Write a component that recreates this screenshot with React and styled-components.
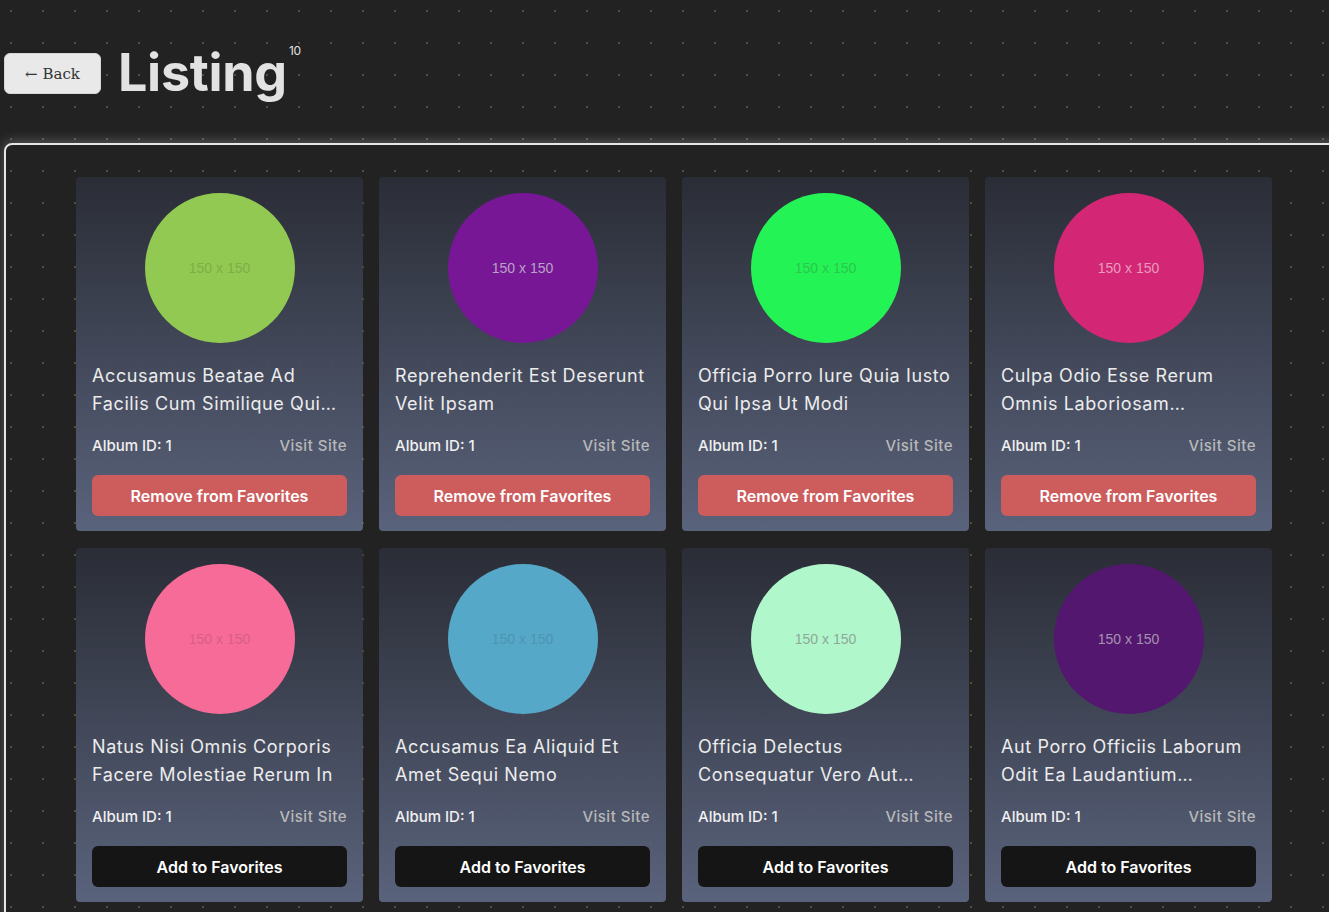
import React from "react";
import styled, { createGlobalStyle } from "styled-components";

const GlobalStyle = createGlobalStyle`
  html, body {
    margin: 0;
    overflow: hidden;
    background-color: #222222;
    background-image: radial-gradient(circle, #4d5236 1px, transparent 1.4px);
    background-size: 32px 32px;
    background-position: -5px -5px;
    font-family: "Inter", "DejaVu Sans", sans-serif;
  }
`;

const Page = styled.div`
  padding: 43px 0 0 4px;
`;

const Header = styled.div`
  display: flex;
  align-items: center;
  gap: 17px;
`;

const BackButton = styled.button`
  width: 97px;
  height: 41px;
  margin-top: 1px;
  background: #e9e9e9;
  border: 1px solid #d6d6d6;
  border-radius: 6px;
  color: #333;
  font-family: "DejaVu Serif", "Liberation Serif", serif;
  font-size: 15px;
  cursor: pointer;
`;

const Title = styled.h1`
  position: relative;
  margin: 0;
  color: #e2e2e2;
  font-size: 52px;
  font-weight: 700;
  letter-spacing: -0.3px;
  line-height: 60px;
`;

const Count = styled.span`
  position: absolute;
  top: 2px;
  left: calc(100% + 2px);
  font-size: 12px;
  line-height: 1;
  font-weight: 400;
  color: #e2e2e2;
`;

const Panel = styled.div`
  margin-top: 40px;
  width: 1400px;
  border: 2px solid #e6e6e6;
  border-radius: 8px;
  box-shadow: 0 -2px 12px rgba(255, 255, 255, 0.25);
  padding: 32px 0 40px 70px;
`;

const Grid = styled.div`
  display: grid;
  grid-template-columns: repeat(4, 287px);
  column-gap: 16px;
  row-gap: 17px;
`;

const Card = styled.div`
  display: flex;
  flex-direction: column;
  padding: 16px 16px 15px;
  border-radius: 4px;
  background: linear-gradient(
    to bottom,
    rgba(43, 46, 56, 0.9),
    rgba(96, 106, 134, 0.9)
  );
`;

const Thumb = styled.div`
  align-self: center;
  width: 150px;
  height: 150px;
  border-radius: 50%;
  background: ${(p) => p.$color};
  display: flex;
  align-items: center;
  justify-content: center;
  color: ${(p) => p.$text};
  font-family: "Liberation Sans", Arial, sans-serif;
  font-size: 14px;
`;

const CardTitle = styled.div`
  margin-top: 19px;
  height: 56px;
  color: #ececec;
  font-size: 18px;
  letter-spacing: 0.6px;
  line-height: 28px;
  display: -webkit-box;
  -webkit-line-clamp: 2;
  -webkit-box-orient: vertical;
  overflow: hidden;
`;

const Meta = styled.div`
  display: flex;
  justify-content: space-between;
  align-items: center;
  margin-top: 18px;
  font-size: 15px;
  font-weight: 500;
  color: #f0f0f0;
`;

const Visit = styled.span`
  color: #b9b9b9;
  letter-spacing: 0.5px;
`;

const ActionButton = styled.button`
  margin-top: 20px;
  height: 41px;
  border: none;
  border-radius: 6px;
  background: ${(p) => (p.$remove ? "#cd5c5c" : "#151515")};
  color: #fff;
  font-family: "Inter", "DejaVu Sans", sans-serif;
  font-size: 16px;
  font-weight: 600;
  cursor: pointer;
`;

const items = [
  { title: "Accusamus Beatae Ad Facilis Cum Similique Qui Sunt", color: "#92c952", text: "#7fae47", fav: true },
  { title: "Reprehenderit Est Deserunt Velit Ipsam", color: "#771796", text: "#b7a3c4", fav: true },
  { title: "Officia Porro Iure Quia Iusto Qui Ipsa Ut Modi", color: "#24f355", text: "#28c94c", fav: true },
  { title: "Culpa Odio Esse Rerum Omnis Laboriosam Voluptate Repudiandae", color: "#d32776", text: "#e89bbd", fav: true },
  { title: "Natus Nisi Omnis Corporis Facere Molestiae Rerum In", color: "#f66b97", text: "#d95f85", fav: false },
  { title: "Accusamus Ea Aliquid Et Amet Sequi Nemo", color: "#56a8c8", text: "#4c95b2", fav: false },
  { title: "Officia Delectus Consequatur Vero Aut Veniam Explicabo Molestias", color: "#b0f7cc", text: "#8fa898", fav: false },
  { title: "Aut Porro Officiis Laborum Odit Ea Laudantium Corporis", color: "#54176f", text: "#a592ad", fav: false },
];

export default function App() {
  return (
    <Page>
      <GlobalStyle />
      <Header>
        <BackButton>← Back</BackButton>
        <Title>
          Listing<Count>10</Count>
        </Title>
      </Header>
      <Panel>
        <Grid>
          {items.map((it, i) => (
            <Card key={i}>
              <Thumb $color={it.color} $text={it.text}>150 x 150</Thumb>
              <CardTitle>{it.title}</CardTitle>
              <Meta>
                <span>Album ID: 1</span>
                <Visit>Visit Site</Visit>
              </Meta>
              <ActionButton $remove={it.fav}>
                {it.fav ? "Remove from Favorites" : "Add to Favorites"}
              </ActionButton>
            </Card>
          ))}
        </Grid>
      </Panel>
    </Page>
  );
}
